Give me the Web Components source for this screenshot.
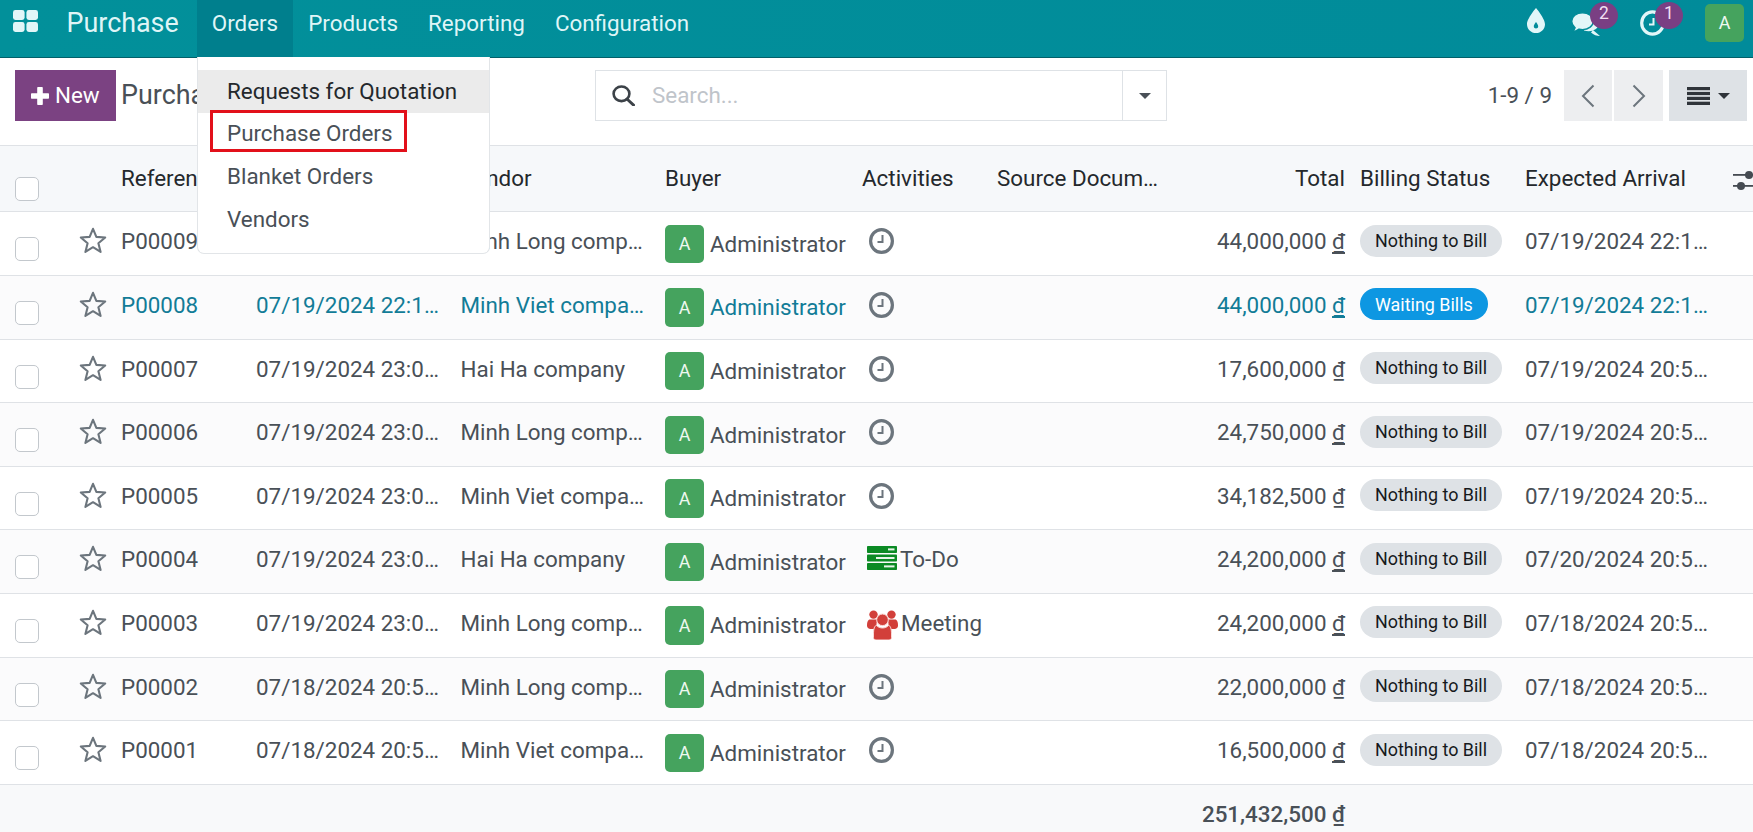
<!DOCTYPE html>
<html lang="en">
<head>
<meta charset="utf-8">
<title>Purchase</title>
<style>
html,body{margin:0;padding:0;height:832px;overflow:hidden;background:#fff}
body{font-family:Roboto,"Noto Sans",sans-serif;font-size:22.4px;line-height:33.6px;color:#495057;display:flex;flex-direction:column}
</style>
</head>
<body>
<po-navbar>
  <po-menu-entry active>Orders</po-menu-entry>
  <po-menu-entry>Products</po-menu-entry>
  <po-menu-entry>Reporting</po-menu-entry>
  <po-menu-entry>Configuration</po-menu-entry>
  <po-dropdown slot="dropdown">
    <po-dropdown-item hover>Requests for Quotation</po-dropdown-item>
    <po-dropdown-item>Purchase Orders</po-dropdown-item>
    <po-dropdown-item>Blanket Orders</po-dropdown-item>
    <po-dropdown-item>Vendors</po-dropdown-item>
  </po-dropdown>
</po-navbar>
<po-toolbar></po-toolbar>
<po-list></po-list>
<script>
const ICONS = {
  star:'<svg viewBox="0 0 28 27" width="28" height="27"><path d="M14 1.8 17.35 9.9 26.2 10.5 19.4 16.3 21.6 24.9 14 20.2 6.4 24.9 8.6 16.3 1.8 10.5 10.65 9.9Z" fill="none" stroke="currentColor" stroke-width="2.1" stroke-linejoin="round"/></svg>',
  clock:'<svg viewBox="0 0 25 26" width="25" height="26"><ellipse cx="12.5" cy="13" rx="10.9" ry="11.4" fill="none" stroke="currentColor" stroke-width="3.2"/><path d="M13.5 7v7H8.5" fill="none" stroke="currentColor" stroke-width="2"/></svg>',
  todo:'<svg viewBox="0 0 30 24" width="30" height="24"><g fill="#0b8a24"><rect width="30" height="7" rx=".8"/><rect y="8.6" width="30" height="7" rx=".8"/><rect y="17" width="30" height="7" rx=".8"/></g><g fill="#e8f5ea"><rect x="21" y="2.4" width="6.5" height="2"/><rect x="9" y="11" width="18.5" height="2"/><rect x="17" y="19.4" width="10.5" height="2"/></g></svg>',
  users:'<svg viewBox="0 0 31 30" width="31" height="30"><g fill="#d23f3a"><circle cx="6.5" cy="4.6" r="4.2"/><circle cx="24.5" cy="4.6" r="4.2"/><path d="M3 9.5h7L9 19H3.5C1.5 19 0 17.5 0 15.5 0 12 1 9.5 3 9.5Z"/><path d="M28 9.5h-7L22 19h5.5C29.5 19 31 17.5 31 15.5 31 12 30 9.5 28 9.5Z"/><g stroke="#fbd9d6" stroke-width="1"><circle cx="15.5" cy="9.8" r="5.8"/><path d="M9.5 15.5C11 17 13 18 15.5 18S20 17 21.5 15.5C23.5 15.5 24.5 19 24.5 24V27.5C24.5 29 23.5 30 22 30H9C7.5 30 6.5 29 6.5 27.5V24C6.5 19 7.5 15.5 9.5 15.5Z"/></g></g></svg>',
  apps:'<svg viewBox="0 0 25 22" width="25" height="22"><g fill="#e2f6f8"><rect width="11.6" height="10" rx="2.4"/><rect x="13.4" width="11.6" height="10" rx="2.4"/><rect y="12" width="11.6" height="10" rx="2.4"/><rect x="13.4" y="12" width="11.6" height="10" rx="2.4"/></g></svg>',
  drop:'<svg viewBox="0 0 18 25" width="18" height="25"><path fill="#e2f6f8" fill-rule="evenodd" d="M9 0C9 0 0 10.5 0 16.2 0 21.2 4 25 9 25S18 21.2 18 16.2C18 10.5 9 0 9 0ZM9 14C9 14 6.8 16.8 6.8 18.2 6.8 19.5 7.8 20.5 9 20.500S11.200 19.500 11.200 18.200C11.200 16.800 9 14 9 14Z"/></svg>',
  chat:'<svg viewBox="0 0 29 24" width="29" height="24"><path fill="#e2f6f8" d="M13 18.5C18 20 23.5 19 26 16 28.5 13 28 9.5 25 7.5L13 12ZM22 18 29 24C26 24 22.5 23 20 20.5Z"/><path fill="#e2f6f8" stroke="#018c99" stroke-width="1.4" d="M11.5.7C5.4.7.7 4.5.7 9.3c0 2.6 1.3 4.8 3.4 6.4-.5 1.7-1.7 3-3 4 2.8-.2 5.2-1.2 7-2.6 1.2.3 2.4.5 3.4.5 6.100 0 10.800-3.800 10.800-8.300S17.600.7 11.500.7Z"/></svg>',
  nclock:'<svg viewBox="0 0 25 26" width="25" height="26"><ellipse cx="12.500" cy="13" rx="10.800" ry="11.200" fill="none" stroke="#e2f6f8" stroke-width="3.200"/><path d="M13.500 8v6.500H9" fill="none" stroke="#e2f6f8" stroke-width="2"/></svg>',
  plus:'<svg viewBox="0 0 18 18" width="18" height="18"><path d="M6.200 1C6.200.4 6.600 0 7.200 0h3.600c.6 0 1 .4 1 1v5.200H17c.6 0 1 .4 1 1v3.600c0 .6-.4 1-1 1h-5.200V17c0 .6-.4 1-1 1H7.200c-.6 0-1-.4-1-1v-5.200H1c-.6 0-1-.4-1-1V7.200c0-.6.4-1 1-1h5.200Z" fill="#fff"/></svg>',
  search:'<svg viewBox="0 0 23 21" width="23" height="21"><ellipse cx="9.500" cy="8.800" rx="7.900" ry="7.300" fill="none" stroke="#3c4248" stroke-width="2.600"/><path d="M15 14 21.500 20" stroke="#3c4248" stroke-width="3" stroke-linecap="round"/></svg>',
  left:'<svg viewBox="0 0 14 24" width="14" height="24"><path d="M12.500 1.500 2 12 12.500 22.500" fill="none" stroke="#6c757d" stroke-width="2"/></svg>',
  right:'<svg viewBox="0 0 14 24" width="14" height="24"><path d="M1.500 1.500 12 12 1.500 22.500" fill="none" stroke="#6c757d" stroke-width="2"/></svg>',
  list:'<svg viewBox="0 0 23 18" width="23" height="18"><g fill="#2f343a"><rect width="23" height="3.200"/><rect y="4.900" width="23" height="3.200"/><rect y="9.800" width="23" height="3.200"/><rect y="14.700" width="23" height="3.300"/></g></svg>',
  sliders:'<svg viewBox="0 0 20 22" width="20" height="22"><g fill="#454b52"><rect x="0" y="5" width="20" height="1.800"/><rect x="0" y="16" width="20" height="1.800"/><circle cx="16" cy="5.900" r="4"/><circle cx="8" cy="16.900" r="4"/></g></svg>'
};
function shadow(el, html){ const r = el.attachShadow({mode:'open'}); r.innerHTML = html; return r; }

class PoIcon extends HTMLElement{
  connectedCallback(){ if(this.shadowRoot) return;
    shadow(this,`<style>:host{display:inline-flex;line-height:0;flex:none}</style>${ICONS[this.getAttribute('name')]||''}`); }
}
customElements.define('po-icon',PoIcon);

class PoAvatar extends HTMLElement{
  constructor(){super();shadow(this,`<style>:host{display:inline-flex;align-items:center;justify-content:center;width:39px;height:38.400px;border-radius:5px;background:#45a35e;color:#eef8f0;font-size:17.920px;line-height:1;flex:none}</style><slot></slot>`)}
}
customElements.define('po-avatar',PoAvatar);

class PoBadge extends HTMLElement{
  constructor(){super();shadow(this,`<style>:host{display:inline-flex;align-items:center;height:32px;padding:0 15px;border-radius:16px;background:#dee2e6;color:#16191c;font-size:17.920px;line-height:1;white-space:nowrap}:host([variant=info]){background:#0d97e2;color:#fff}</style><slot></slot>`)}
}
customElements.define('po-badge',PoBadge);

class PoCheck extends HTMLElement{
  constructor(){super();shadow(this,`<style>:host{display:block;width:24px;height:24px;box-sizing:border-box;border:1.500px solid #c3c8cd;border-radius:5px;background:#fff}</style>`)}
}
customElements.define('po-check',PoCheck);

class PoCount extends HTMLElement{
  constructor(){super();shadow(this,`<style>:host{position:absolute;top:2px;left:19px;width:28px;height:27px;border-radius:50%;background:#7a3f83;color:#f2dff2;font-size:17.500px;line-height:23px;text-align:center}</style><slot></slot>`)}
}
customElements.define('po-count',PoCount);

class PoMenuEntry extends HTMLElement{
  constructor(){super();shadow(this,`<style>:host{display:flex;align-items:center;height:47px;padding:0 15px 10px;color:#dff5f7;font-size:22.400px;white-space:nowrap}:host([active]){background:#007f8d}</style><slot></slot>`)}
}
customElements.define('po-menu-entry',PoMenuEntry);

class PoNavbar extends HTMLElement{
  constructor(){super();shadow(this,`<style>
    :host{display:flex;position:relative;z-index:10;height:58px;flex:none;box-sizing:border-box;align-items:flex-start;background:linear-gradient(90deg,#02909a,#018b9a);border-bottom:1px solid #02606a}
    .apps{margin:10px 0 0 13px}
    .brand{margin:0 18px 0 28.500px;line-height:46px;height:57px;font-size:26.880px;color:#dff5f7}
    .menu{display:flex;height:57px}
    .right{margin-left:auto;display:flex;align-items:flex-start}
    .sys{position:relative}
    .drop{margin:8px 26px 0 0}.chat{margin:12px 40px 0 0;height:24px}.clk{margin:10px 40px 0 0;height:26px}
    .chat po-count{top:-10px;left:19px}.clk po-count{top:-8px;left:15px}
    .me{margin:4px 9px 0 0}
    ::slotted(po-dropdown){position:absolute;left:197px;top:57px}
  </style>
  <po-icon class="apps" name="apps"></po-icon>
  <div class="brand">Purchase</div>
  <div class="menu"><slot></slot></div>
  <div class="right">
    <div class="sys drop"><po-icon name="drop"></po-icon></div>
    <div class="sys chat"><po-icon name="chat"></po-icon><po-count>2</po-count></div>
    <div class="sys clk"><po-icon name="nclock"></po-icon><po-count>1</po-count></div>
    <po-avatar class="me">A</po-avatar>
  </div>
  <slot name="dropdown"></slot>`)}
}
customElements.define('po-navbar',PoNavbar);

class PoDropdown extends HTMLElement{
  constructor(){super();shadow(this,`<style>
    :host{display:block;box-sizing:border-box;width:293px;height:197px;padding-top:13px;background:#fff;border:1px solid #e2e5e8;border-top:0;border-radius:0 0 7px 7px;color:#495057}
    .mark{position:absolute;left:12px;top:52.500px;width:197px;height:42.500px;box-sizing:border-box;border:3px solid #e2101a;pointer-events:none}
  </style><slot></slot><div class="mark"></div>`)}
}
customElements.define('po-dropdown',PoDropdown);

class PoDropdownItem extends HTMLElement{
  constructor(){super();shadow(this,`<style>:host{display:flex;align-items:center;height:42.800px;padding-left:29px;white-space:nowrap}:host([hover]){background:#ebebeb;color:#24282c}</style><slot></slot>`)}
}
customElements.define('po-dropdown-item',PoDropdownItem);

class PoToolbar extends HTMLElement{
  constructor(){super();shadow(this,`<style>
    :host{display:grid;grid-template-columns:595px 572px 1fr;flex:none;height:87px;box-sizing:border-box;padding-top:12px;align-items:start}
    .l{display:flex;align-items:center;padding-left:15px}
    .new{display:flex;align-items:center;gap:6px;width:101px;height:51px;box-sizing:border-box;padding-left:16px;background:#7b4282;color:#fff}
    .title{margin-left:5px;font-size:26.880px;color:#495057;white-space:nowrap}
    .s{display:flex;align-items:center;height:51px;box-sizing:border-box;border:1px solid #dee2e6}
    .s .mag{margin-left:16px}
    .s .ph{margin-left:17px;flex:1;color:#bfc4ca}
    .s .cv{width:43px;height:100%;border-left:1px solid #dee2e6;display:flex;align-items:center;justify-content:center}
    .caret{width:0;height:0;border-left:6px solid transparent;border-right:6px solid transparent;border-top:6px solid #495057}
    .r{display:flex;align-items:center;justify-content:flex-end;padding-right:6px}
    .pg{margin-right:12px;color:#495057}
    .b{display:flex;align-items:center;justify-content:center;height:51px;background:#edeef0}
    .v{background:#dee2e6;margin-left:6px;width:78px;gap:8px}
    .v .caret{border-top-color:#2f343a}
  </style>
  <div class="l"><div class="new"><po-icon name="plus"></po-icon><span>New</span></div><div class="title">Purchase Orders</div></div>
  <div class="s"><po-icon class="mag" name="search"></po-icon><div class="ph">Search...</div><div class="cv"><div class="caret"></div></div></div>
  <div class="r"><div class="pg">1-9 / 9</div>
    <div class="b" style="width:48px;margin-right:2px"><po-icon name="left"></po-icon></div>
    <div class="b" style="width:49px"><po-icon name="right"></po-icon></div>
    <div class="b v"><po-icon name="list"></po-icon><div class="caret"></div></div>
  </div>`)}
}
customElements.define('po-toolbar',PoToolbar);

class PoRow extends HTMLElement{
  constructor(){super();shadow(this,`<style>
    :host{display:grid;grid-template-columns:78px 43px 135px 204.500px 204.500px 197px 135px 348px 180px 1fr;height:63.600px;flex:none;box-sizing:border-box;border-bottom:1px solid #dfe2e6;align-items:start;background:#fff;color:#495057}
    :host([striped]){background:#fbfbfc}
    :host([link]){color:#127c97}
    :host([head]){height:67.400px;background:#f6f8fa;color:#24282c;border-top:1px solid #dfe2e6;border-bottom:1.500px solid #dfe2e6;align-items:center}
    :host([foot]){flex:1;height:auto;background:#f8f9fa;border-bottom:0;font-weight:500}
  </style><slot></slot>`)}
}
customElements.define('po-row',PoRow);

const ROWS = [
 ['P00009','07/19/2024 22:1…','Minh Long comp…','clock','','44,000,000','none','07/19/2024 22:1…'],
 ['P00008','07/19/2024 22:1…','Minh Viet compa…','clock','','44,000,000','info','07/19/2024 22:1…'],
 ['P00007','07/19/2024 23:0…','Hai Ha company','clock','','17,600,000','none','07/19/2024 20:5…'],
 ['P00006','07/19/2024 23:0…','Minh Long comp…','clock','','24,750,000','none','07/19/2024 20:5…'],
 ['P00005','07/19/2024 23:0…','Minh Viet compa…','clock','','34,182,500','none','07/19/2024 20:5…'],
 ['P00004','07/19/2024 23:0…','Hai Ha company','todo','To-Do','24,200,000','none','07/20/2024 20:5…'],
 ['P00003','07/19/2024 23:0…','Minh Long comp…','users','Meeting','24,200,000','none','07/18/2024 20:5…'],
 ['P00002','07/18/2024 20:5…','Minh Long comp…','clock','','22,000,000','none','07/18/2024 20:5…'],
 ['P00001','07/18/2024 20:5…','Minh Viet compa…','clock','','16,500,000','none','07/18/2024 20:5…']
];
class PoList extends HTMLElement{
  constructor(){super();
    const rows = ROWS.map((r,i)=>`<po-row ${i%2?'striped':''} ${i==1?'link':''}>
      <div class="chk"><po-check></po-check></div>
      <div class="st"><po-icon name="star"></po-icon></div>
      <div class="t">${r[0]}</div>
      <div class="t">${r[1]}</div>
      <div class="t">${r[2]}</div>
      <div class="by"><po-avatar>A</po-avatar><span>Administrator</span></div>
      <div class="ac ${r[3]}"><po-icon name="${r[3]}"></po-icon>${r[4]?`<span>${r[4]}</span>`:''}</div>
      <div class="t tot">${r[5]}&nbsp;<u>₫</u></div>
      <div class="bl"><po-badge ${r[6]=='info'?'variant="info"':''}>${r[6]=='info'?'Waiting Bills':'Nothing to Bill'}</po-badge></div>
      <div class="t">${r[7]}</div>
    </po-row>`).join('');
    shadow(this,`<style>
      :host{display:flex;flex-direction:column;flex:1;min-height:0}
      .chk{padding:25px 0 0 15px}
      .st{padding-top:15px;margin-left:1px;color:#6c757d}
      .t{padding-top:13px;white-space:nowrap}
      .tot{text-align:right}
      u{text-underline-offset:3px}
      .by{display:flex;align-items:center;gap:6px;padding-top:12.500px;white-space:nowrap}
      .by span{margin-top:1px}
      .ac{display:flex;align-items:flex-start;gap:3.500px;margin-left:4.500px;padding-top:16px;white-space:nowrap;color:#6c757d}
      .ac span{margin-top:-3px;color:#495057}
      :host .ac.clock{margin-left:6.500px}
      .bl{display:flex;padding:12.500px 0 0 15px}
      .h{white-space:nowrap}
      .hchk{align-self:start;padding:31px 0 0 15px}
      .two{display:flex;justify-content:space-between}
      .bs{padding-left:15px}
      .last{display:flex;align-items:center;justify-content:space-between}
      .last po-icon{margin-top:3px}
    </style>
    <po-row head>
      <div class="hchk"><po-check></po-check></div><div></div>
      <div class="h">Reference</div><div class="h">Order Deadline</div><div class="h">Vendor</div><div class="h">Buyer</div>
      <div class="h">Activities</div>
      <div class="h two"><span>Source Docum…</span><span>Total</span></div>
      <div class="h bs">Billing Status</div>
      <div class="h last"><span>Expected Arrival</span><po-icon name="sliders"></po-icon></div>
    </po-row>
    ${rows}
    <po-row foot><div></div><div></div><div></div><div></div><div></div><div></div><div></div>
      <div class="t tot">251,432,500&nbsp;<u>₫</u></div><div></div><div></div></po-row>`);
  }
}
customElements.define('po-list',PoList);
</script>
</body>
</html>
